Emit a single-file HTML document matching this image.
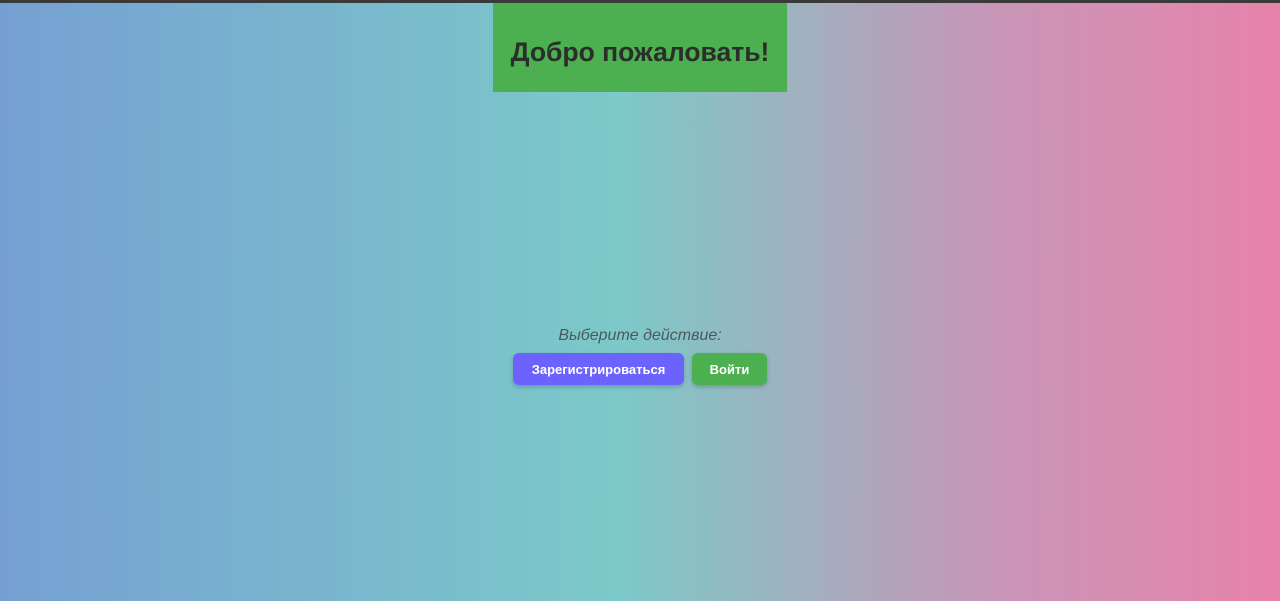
<!DOCTYPE html>
<html><head><meta charset="utf-8"><style>
html,body{margin:0;padding:0;width:1280px;height:601px;overflow:hidden}
body{background:linear-gradient(to right,#76a0d3 0%,#7cc9c9 48%,#8fbcc2 56%,#c895b7 78%,#e883ab 100%);font-family:"Liberation Sans",sans-serif;position:relative}
.top{position:absolute;left:0;top:0;width:1280px;height:3px;background:#3a3a3a}
.hd{position:absolute;left:493px;top:3px;width:294px;height:89px;background:#4caf50;font-size:26.5px;font-weight:bold;color:#2a2f2a;text-align:center;line-height:30px;box-sizing:border-box;padding-top:34px}
.p{position:absolute;left:0;width:1280px;top:327px;text-align:center;font-style:italic;font-size:16px;color:#4a5a5e}
.b{position:absolute;top:353px;height:32px;border-radius:6px;color:#fff;font-weight:bold;font-size:13px;display:flex;align-items:center;justify-content:center;box-shadow:0 2px 5px rgba(0,0,0,.2)}
</style></head><body>
<div class="top"></div>
<div class="hd">Добро пожаловать!</div>
<div class="p">Выберите действие:</div>
<div class="b" style="left:513px;width:171px;background:#6c63ff">Зарегистрироваться</div>
<div class="b" style="left:692px;width:75px;background:#4caf50">Войти</div>
</body></html>
